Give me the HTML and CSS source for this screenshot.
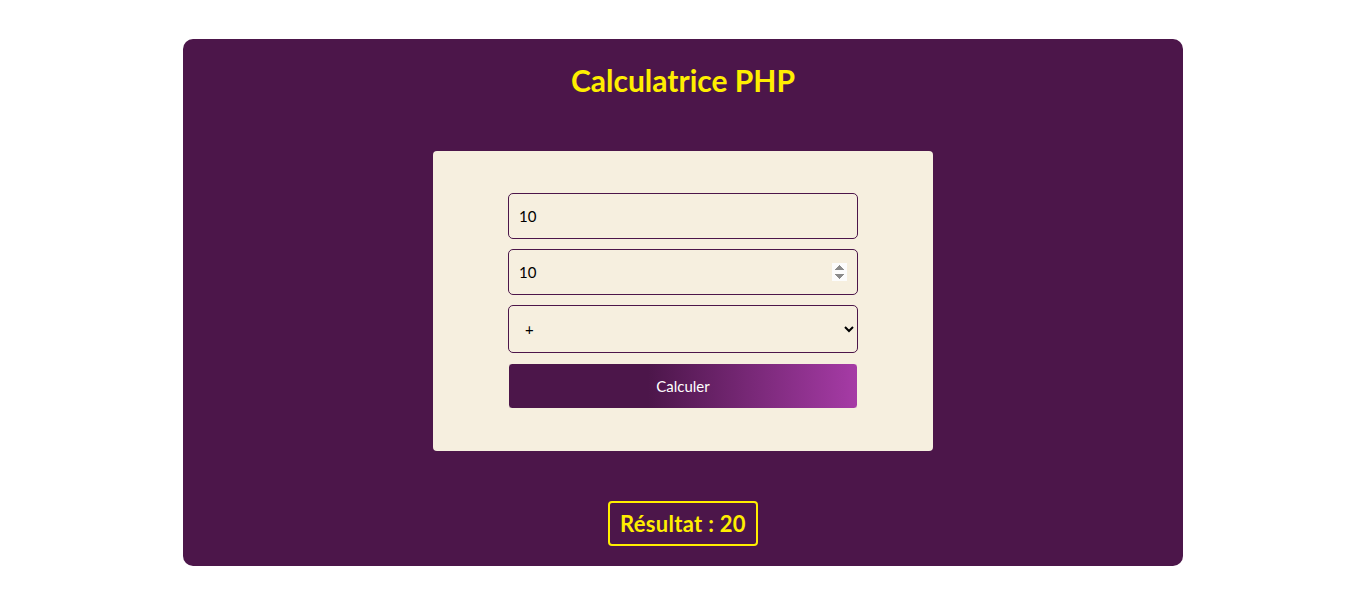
FILE: index.html
```html
<!DOCTYPE html>
<html lang="fr">
<head>
<meta charset="utf-8">
<title>Calculatrice PHP</title>
<link rel="stylesheet" href="styles.css">
</head>
<body>
<main class="app">
  <h1 class="title">Calculatrice PHP</h1>
  <form class="card">
    <input class="field" type="number" name="a" value="10">
    <input class="field" type="number" name="b" value="10" autofocus>
    <select class="field select" name="op">
      <option>+</option>
      <option>-</option>
      <option>*</option>
      <option>/</option>
    </select>
    <button class="btn" type="button">Calculer</button>
  </form>
  <div class="result">Résultat : 20</div>
</main>
</body>
</html>
```

FILE: styles.css
```css
* { box-sizing: border-box; }
html, body { margin: 0; padding: 0; background: #ffffff; }
body { font-family: "Lato", "Open Sans", sans-serif; padding-left: 2px; }

.app {
  width: 1000px;
  margin: 39px auto 0;
  background: #4c164a;
  border-radius: 10px;
  padding: 23px 0 20px;
  display: flex;
  flex-direction: column;
  align-items: center;
}

.title {
  margin: 0;
  color: #ffee00;
  font-size: 30px;
  line-height: 36px;
  font-weight: 700;
}

.card {
  margin-top: 53px;
  width: 500px;
  height: 300px;
  background: #f6efdf;
  border-radius: 4px;
  padding: 42px 75px;
  display: flex;
  flex-direction: column;
  gap: 10px;
}

.field {
  width: 350px;
  height: 46px;
  border: 1px solid #4c164a;
  border-radius: 5px;
  background: #f6efdf;
  padding: 0 10px;
  font-family: "Lato", "Open Sans", sans-serif;
  font-size: 15px;
  color: #000;
  outline: none;
}

.select {
  height: 48px;
  padding-left: 12px;
}

.btn {
  width: 350px;
  height: 46px;
  border: 1px solid #f6efdf;
  border-radius: 4px;
  background: linear-gradient(to right, #4c164a 40%, #a63ba6);
  color: #ffffff;
  font-family: "Lato", "Open Sans", sans-serif;
  font-size: 15px;
}

.result {
  margin-top: 50px;
  border: 2px solid #ffee00;
  border-radius: 4px;
  width: 150px;
  height: 45px;
  display: flex;
  align-items: center;
  justify-content: center;
  color: #ffee00;
  font-size: 22px;
  font-weight: 700;
  letter-spacing: 0.3px;
}
```
